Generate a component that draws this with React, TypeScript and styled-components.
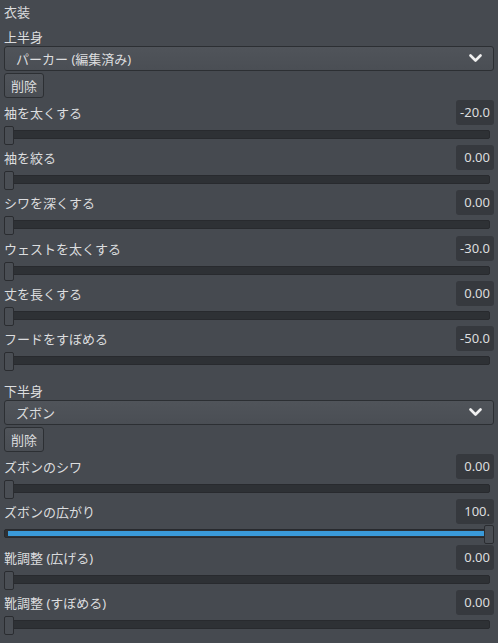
import React from 'react';
import styled, { createGlobalStyle } from 'styled-components';

const GlobalStyle = createGlobalStyle`
	html, body {
		margin: 0;
		padding: 0;
		background: #464a50;
	}
	body {
		font-family: 'Noto Sans', 'Noto Sans CJK JP', sans-serif;
		font-size: 13px;
		color: #dcdddf;
	}
`

const Page = styled.div`
	padding: 0 4px;
	width: 490px;
	min-height: 643px;
	box-sizing: content-box;
`

const Title = styled.div`
	line-height: 24px;
	margin-bottom: 4px;
`

const Section = styled.div<{ $first?: boolean }>`
	margin-top: ${p => p.$first ? '0' : '11px'};
`

const SubTitle = styled.div`
	line-height: 18px;
	height: 18px;
`

const Select = styled.div`
	height: 25px;
	box-sizing: border-box;
	border: 1px solid #2c2f33;
	border-radius: 3px;
	background: linear-gradient(#50545a, #4a4e54);
	display: flex;
	align-items: center;
	justify-content: space-between;
	padding: 0 11px 0 11px;
`

const Button = styled.div`
	margin-top: 2px;
	width: 40px;
	height: 25px;
	box-sizing: border-box;
	border: 1px solid #2c2f33;
	border-radius: 3px;
	background: linear-gradient(#50545a, #4a4e54);
	display: flex;
	align-items: center;
	justify-content: center;
`

const Rows = styled.div`
	margin-top: 2px;
`

const Row = styled.div`
	height: 45.2px;
`

const RowHeader = styled.div`
	height: 25px;
	display: flex;
	align-items: center;
	justify-content: space-between;
`

const Value = styled.div`
	width: 38px;
	height: 25px;
	box-sizing: border-box;
	background: #36393e;
	border-radius: 3px;
	text-align: right;
	padding-right: 4px;
	line-height: 25px;
	overflow: hidden;
	white-space: nowrap;
`

const Slider = styled.div`
	position: relative;
	height: 20.2px;
`

const Track = styled.div`
	position: relative;
	top: 5px;
	width: 486px;
	height: 9px;
	box-sizing: border-box;
	background: #2e3135;
	border: 1px solid #282a2e;
	border-radius: 2px;
`

const Fill = styled.div`
	position: absolute;
	left: 3px;
	top: 1px;
	height: 5px;
	background: #3a9ad9;
`

const Thumb = styled.div`
	position: absolute;
	top: 1px;
	width: 10px;
	height: 19px;
	box-sizing: border-box;
	background: #4a4e54;
	border: 1px solid #2a2c30;
	border-radius: 2px;
`

type SliderRowProps = {
	label: string
	value: number
	text: string
}

function SliderRow(props: SliderRowProps) {
	const pct = Math.max(0, Math.min(1, props.value / 100))
	return (<Row>
		<RowHeader>
			<span>{props.label}</span>
			<Value>{props.text}</Value>
		</RowHeader>
		<Slider>
			<Track>
				{pct > 0 ? <Fill style={{ width: pct * 476 + 'px' }} /> : null}
			</Track>
			<Thumb style={{ left: pct * 480 + 'px' }} />
		</Slider>
	</Row>)
}

function Chevron() {
	return (<svg width="13" height="9" viewBox="0 0 13 9">
		<polyline points="1.5,1.5 6.5,6.5 11.5,1.5" fill="none" stroke="#f0f0f0" strokeWidth="2.6" strokeLinecap="round" strokeLinejoin="round" />
	</svg>)
}

const upper = [
	{ label: '袖を太くする', value: -20, text: '-20.0' },
	{ label: '袖を絞る', value: 0, text: '0.00' },
	{ label: 'シワを深くする', value: 0, text: '0.00' },
	{ label: 'ウェストを太くする', value: -30, text: '-30.0' },
	{ label: '丈を長くする', value: 0, text: '0.00' },
	{ label: 'フードをすぼめる', value: -50, text: '-50.0' },
]

const lower = [
	{ label: 'ズボンのシワ', value: 0, text: '0.00' },
	{ label: 'ズボンの広がり', value: 100, text: '100.' },
	{ label: '靴調整 (広げる)', value: 0, text: '0.00' },
	{ label: '靴調整 (すぼめる)', value: 0, text: '0.00' },
]

export default function App() {
	return (<>
		<GlobalStyle />
		<Page>
			<Title>衣装</Title>
			<Section $first>
				<SubTitle>上半身</SubTitle>
				<Select><span>パーカー (編集済み)</span><Chevron /></Select>
				<Button>削除</Button>
				<Rows>
					{upper.map(r => <SliderRow key={r.label} {...r} />)}
				</Rows>
			</Section>
			<Section>
				<SubTitle>下半身</SubTitle>
				<Select><span>ズボン</span><Chevron /></Select>
				<Button>削除</Button>
				<Rows>
					{lower.map(r => <SliderRow key={r.label} {...r} />)}
				</Rows>
			</Section>
		</Page>
	</>)
}
